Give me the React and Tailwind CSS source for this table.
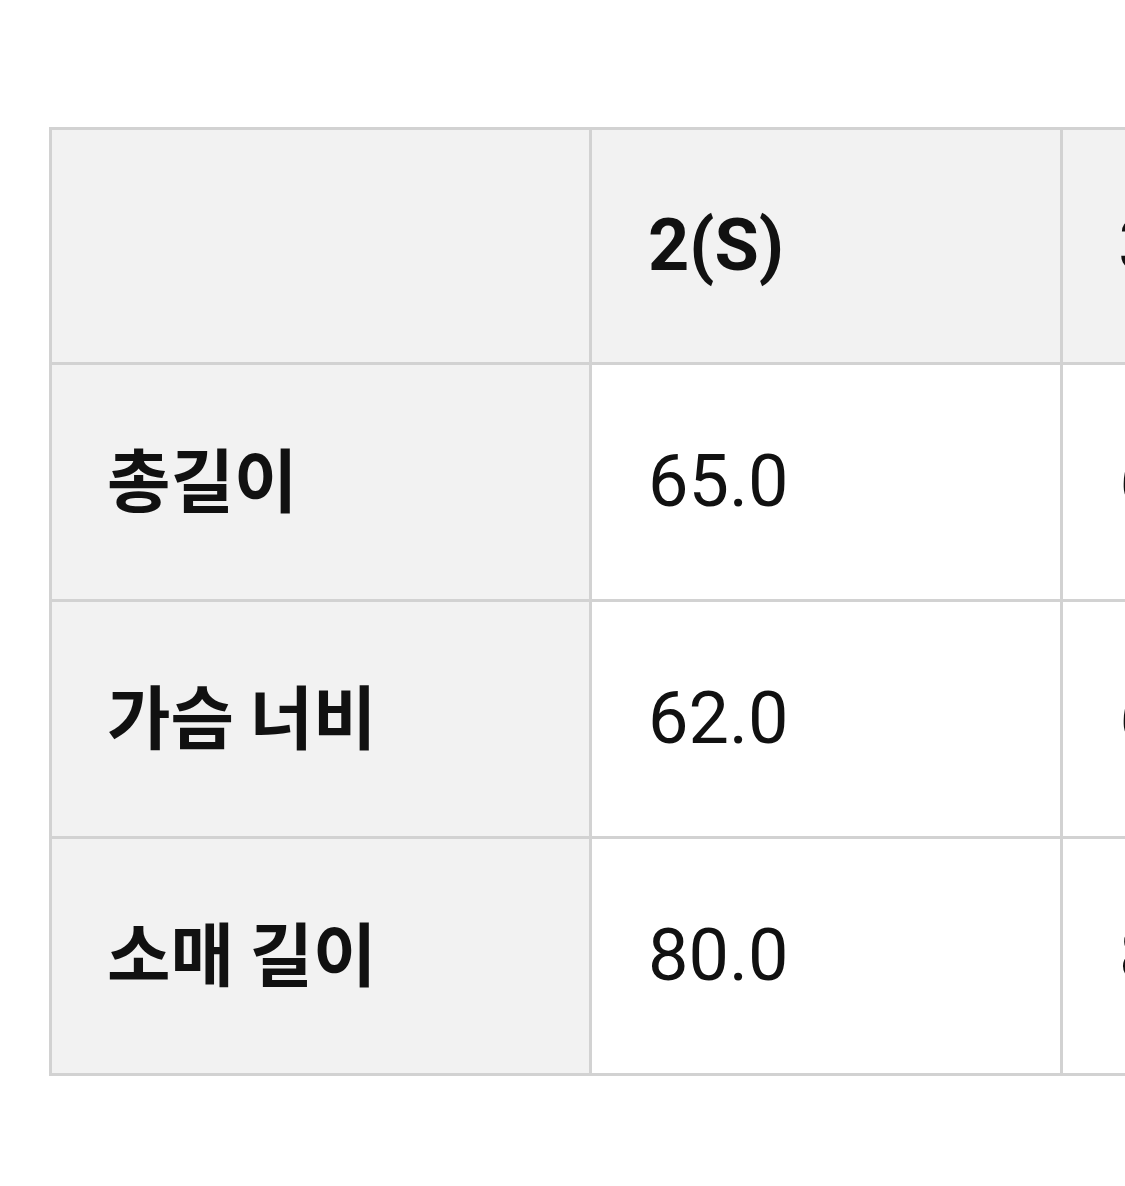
export default function App() {
  const rows = [
    ["총길이", "65.0", "67.0"],
    ["가슴 너비", "62.0", "64.0"],
    ["소매 길이", "80.0", "81.0"],
  ];
  const latin = { fontFamily: "Roboto, 'Noto Sans CJK KR', sans-serif" };
  return (
    <div className="w-[1125px] h-[1186px] bg-white overflow-hidden pt-[127px] pl-[49px]" style={latin}>
      <div className="grid grid-cols-[540px_471px_471px] w-[1482px] border-l-[3px] border-t-[3px] border-[#d2d2d2] text-[#111111]">
        <div className="h-[235px] bg-[#f2f2f2] border-r-[3px] border-b-[3px] border-[#d2d2d2]"></div>
        <div className="h-[235px] bg-[#f2f2f2] border-r-[3px] border-b-[3px] border-[#d2d2d2] flex items-center pl-[56px] text-[72px] font-bold">2(S)</div>
        <div className="h-[235px] bg-[#f2f2f2] border-r-[3px] border-b-[3px] border-[#d2d2d2] flex items-center pl-[56px] text-[72px] font-bold">3(M)</div>
        {rows.map((r) => (
          <>
            <div key={r[0] + "a"} className="h-[237px] bg-[#f2f2f2] border-r-[3px] border-b-[3px] border-[#d2d2d2] flex items-center pl-[55px] pb-[10px] text-[69px] leading-none font-bold" style={{ fontFamily: "'Noto Sans CJK KR', sans-serif" }}>{r[0]}</div>
            <div key={r[0] + "b"} className="h-[237px] bg-white border-r-[3px] border-b-[3px] border-[#d2d2d2] flex items-center pl-[56px] text-[72px]">{r[1]}</div>
            <div key={r[0] + "c"} className="h-[237px] bg-white border-r-[3px] border-b-[3px] border-[#d2d2d2] flex items-center pl-[56px] text-[72px]">{r[2]}</div>
          </>
        ))}
      </div>
    </div>
  );
}
